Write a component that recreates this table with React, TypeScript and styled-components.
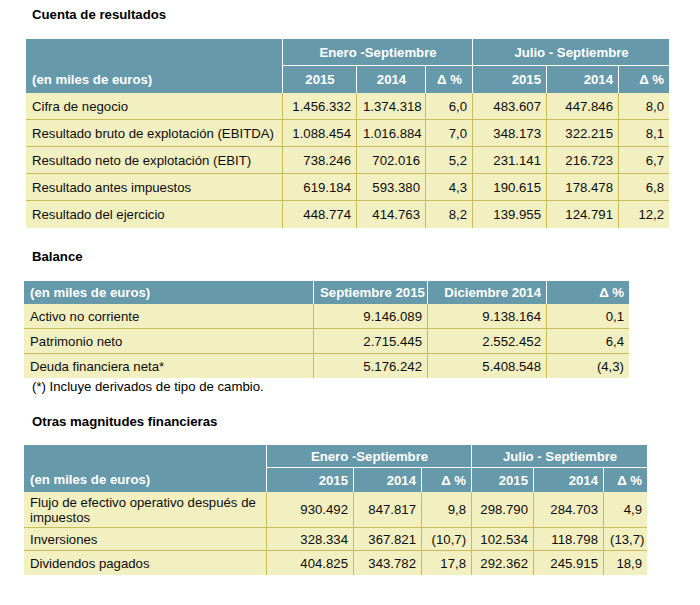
import React from 'react';
import styled, { createGlobalStyle } from 'styled-components';

type Align = 'left' | 'center' | 'right';

const GlobalStyle = createGlobalStyle`
	body {
		margin: 0;
		background: #ffffff;
		color: #000000;
		font-family: "Liberation Sans", Arial, sans-serif;
	}
`;

const HEAD = '#6699aa';
const BODY = '#f2efc1';
const RULE = '#c9bc5b';
const FONT = '13.2px';

// column widths, measured from the reference
const resultadosCols = [257, 74, 69, 47, 74, 72, 50];
const balanceCols = [290, 114, 119, 82];
const otrasCols = [243, 87, 68, 50, 62, 70, 43];

const resultados = [
	['Cifra de negocio', '1.456.332', '1.374.318', '6,0', '483.607', '447.846', '8,0'],
	['Resultado bruto de explotación (EBITDA)', '1.088.454', '1.016.884', '7,0', '348.173', '322.215', '8,1'],
	['Resultado neto de explotación (EBIT)', '738.246', '702.016', '5,2', '231.141', '216.723', '6,7'],
	['Resultado antes impuestos', '619.184', '593.380', '4,3', '190.615', '178.478', '6,8'],
	['Resultado del ejercicio', '448.774', '414.763', '8,2', '139.955', '124.791', '12,2'],
];

const balance = [
	['Activo no corriente', '9.146.089', '9.138.164', '0,1'],
	['Patrimonio neto', '2.715.445', '2.552.452', '6,4'],
	['Deuda financiera neta*', '5.176.242', '5.408.548', '(4,3)'],
];

const otras: { cells: string[]; h: number }[] = [
	{ cells: ['Flujo de efectivo operativo después de impuestos', '930.492', '847.817', '9,8', '298.790', '284.703', '4,9'], h: 36 },
	{ cells: ['Inversiones', '328.334', '367.821', '(10,7)', '102.534', '118.798', '(13,7)'], h: 23 },
	{ cells: ['Dividendos pagados', '404.825', '343.782', '17,8', '292.362', '245.915', '18,9'], h: 24 },
];

const App: React.FC = () => {
	return (
		<Page>
			<GlobalStyle />
			<Title>Cuenta de resultados</Title>
			<Table $left={26} $top={16} $width={643}>
				<colgroup>
					{resultadosCols.map((w, i) => <Col key={i} $w={w} />)}
				</colgroup>
				<thead>
					<tr>
						<Head rowSpan={2} $align="left" $h={54} $valign="bottom" $lh={27}>(en miles de euros)</Head>
						<Head colSpan={3} $align="center" $h={27} $line>Enero -Septiembre</Head>
						<Head colSpan={3} $align="center" $h={27} $line $last>Julio - Septiembre</Head>
					</tr>
					<tr>
						<Head $align="center" $h={27}>2015</Head>
						<Head $align="center" $h={27}>2014</Head>
						<Head $align="center" $h={27}>Δ %</Head>
						<Head $align="right" $h={27}>2015</Head>
						<Head $align="right" $h={27}>2014</Head>
						<Head $align="right" $h={27} $last>Δ %</Head>
					</tr>
				</thead>
				<tbody>
					{resultados.map((row, r) => (
						<tr key={r}>
							{row.map((c, i) => (
								<Cell key={i} $label={i === 0} $h={27} $last={i === row.length - 1} $rule={r < resultados.length - 1}>
									{c}
								</Cell>
							))}
						</tr>
					))}
				</tbody>
			</Table>

			<Title $top={21}>Balance</Title>
			<Table $left={24} $top={16} $width={605}>
				<colgroup>
					{balanceCols.map((w, i) => <Col key={i} $w={w} />)}
				</colgroup>
				<thead>
					<tr>
						<Head $align="left" $h={23}>(en miles de euros)</Head>
						<Head $align="right" $h={23}>Septiembre 2015</Head>
						<Head $align="right" $h={23}>Diciembre 2014</Head>
						<Head $align="right" $h={23} $last>Δ %</Head>
					</tr>
				</thead>
				<tbody>
					{balance.map((row, r) => (
						<tr key={r}>
							{row.map((c, i) => (
								<Cell key={i} $label={i === 0} $h={r === 2 ? 24 : 25} $last={i === row.length - 1} $rule={r < balance.length - 1}>
									{c}
								</Cell>
							))}
						</tr>
					))}
				</tbody>
			</Table>
			<Note>(*) Incluye derivados de tipo de cambio.</Note>

			<Title $top={20}>Otras magnitudes financieras</Title>
			<Table $left={24} $top={15} $width={623}>
				<colgroup>
					{otrasCols.map((w, i) => <Col key={i} $w={w} />)}
				</colgroup>
				<thead>
					<tr>
						<Head rowSpan={2} $align="left" $h={47} $valign="bottom" $lh={24}>(en miles de euros)</Head>
						<Head colSpan={3} $align="center" $h={23} $line>Enero -Septiembre</Head>
						<Head colSpan={3} $align="center" $h={23} $line $last>Julio - Septiembre</Head>
					</tr>
					<tr>
						<Head $align="right" $h={24}>2015</Head>
						<Head $align="right" $h={24}>2014</Head>
						<Head $align="right" $h={24}>Δ %</Head>
						<Head $align="right" $h={24}>2015</Head>
						<Head $align="right" $h={24}>2014</Head>
						<Head $align="right" $h={24} $last>Δ %</Head>
					</tr>
				</thead>
				<tbody>
					{otras.map((row, r) => (
						<tr key={r}>
							{row.cells.map((c, i) => (
								<Cell key={i} $label={i === 0} $h={row.h} $last={i === row.cells.length - 1} $rule={r < otras.length - 1}>
									{c}
								</Cell>
							))}
						</tr>
					))}
				</tbody>
			</Table>
		</Page>
	);
};

export default App;

const Page = styled.div`
	width: 700px;
	padding-top: 7px;
`;

const Title = styled.h2<{ $top?: number }>`
	margin: ${(p) => p.$top ?? 0}px 0 0 32px;
	font-size: ${FONT};
	font-weight: 700;
	line-height: 16px;
`;

const Table = styled.table<{ $left: number; $top: number; $width: number }>`
	margin: ${(p) => p.$top}px 0 0 ${(p) => p.$left}px;
	width: ${(p) => p.$width}px;
	table-layout: fixed;
	border-collapse: separate;
	border-spacing: 0;
	font-size: ${FONT};
`;

const Col = styled.col<{ $w: number }>`
	width: ${(p) => p.$w}px;
`;

const Head = styled.th<{ $align: Align; $h: number; $line?: boolean; $last?: boolean; $valign?: 'middle' | 'bottom'; $lh?: number }>`
	box-sizing: border-box;
	height: ${(p) => p.$h}px;
	padding: 0 5px 0 6px;
	background: ${HEAD};
	color: #ffffff;
	font-weight: 700;
	line-height: ${(p) => (p.$lh ? `${p.$lh}px` : '15px')};
	text-align: ${(p) => p.$align};
	vertical-align: ${(p) => p.$valign ?? 'middle'};
	white-space: nowrap;
	border-right: ${(p) => (p.$last ? 'none' : '1px solid #ffffff')};
	border-bottom: ${(p) => (p.$line ? '1px solid #ffffff' : 'none')};
`;

const Cell = styled.td<{ $label?: boolean; $h: number; $last?: boolean; $rule?: boolean }>`
	box-sizing: border-box;
	height: ${(p) => p.$h}px;
	padding: 0 5px 0 6px;
	background: ${BODY};
	color: #0d0d0d;
	line-height: 15px;
	text-align: ${(p) => (p.$label ? 'left' : 'right')};
	vertical-align: middle;
	border-right: ${(p) => (p.$last ? 'none' : `1px solid ${RULE}`)};
	border-bottom: ${(p) => (p.$rule ? `1px solid ${RULE}` : 'none')};
`;

const Note = styled.p`
	margin: 1px 0 0 32px;
	font-size: ${FONT};
	line-height: 15px;
`;
